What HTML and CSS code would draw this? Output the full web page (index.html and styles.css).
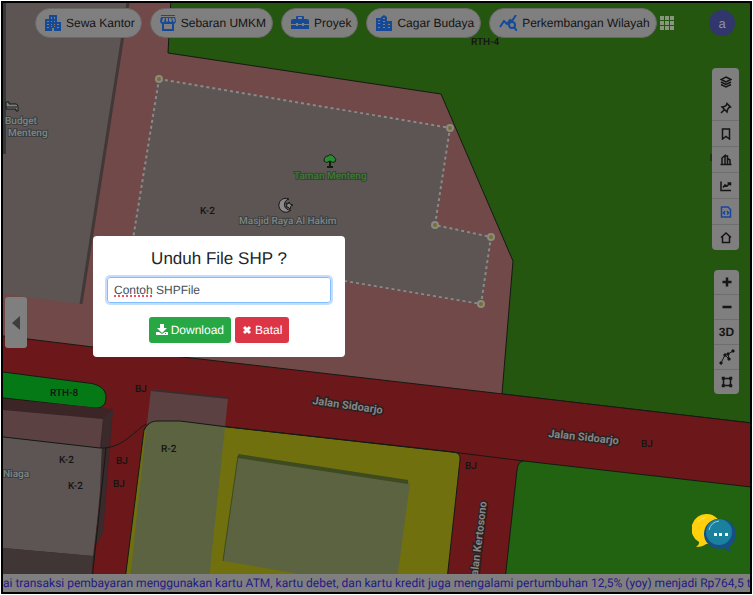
FILE: index.html
```html
<!DOCTYPE html>
<html lang="id">
<head>
<meta charset="utf-8">
<meta name="viewport" content="width=device-width, initial-scale=1">
<title>Unduh File SHP</title>
<link rel="stylesheet" href="styles.css">
</head>
<body>
<div class="app">
  <svg class="map" viewBox="3 3 747 589" preserveAspectRatio="xMidYMid slice" role="img" aria-label="Peta zonasi">
    <rect class="pink" x="3" y="3" width="747" height="589"/>
    <path class="zone park" d="M171 -2L168 53L441 94L513 261L502 394L760 424V-2Z"/>
    <path class="building" d="M3 3H128L81 304L3 294Z"/>
    <path class="wall" d="M128 3L81 304"/>
    <path class="edge-strip" d="M3 3H6V154H3Z"/>
    <path class="zone road" d="M-5 335L93 347L200 359L503 394L760 424V600H-5Z"/>
    <path class="zone lane" d="M-5 371L88 383C100 384 106 390 106 397C106 405 102 409 93 408L-5 397Z"/>
    <path class="shadow" d="M3 399L113 409L103 533L95 546L92 580H3Z"/>
    <path class="roof" d="M3 410L103 419L100 448L3 437Z"/>
    <path class="building" d="M3 437L100 448H106L101 490L93 556L3 548Z"/>
    <path class="side" d="M103 419L113 409L109 448L103 533L95 546L100 490Z"/>
    <path class="base" d="M3 548L93 556L91 580H3Z"/>
    <path class="line" d="M-5 436L100 448C122 449 133 432 146 424M106 448L92 580"/>
    <path class="zone yellow" d="M125 580L144 430C147 424 151 421 158 421L180 421L228 427L454 452Q461 453 460 460L447 580Z"/>
    <path class="roof" d="M151 389L228 398L225 427L180 421L158 421L147 424Z"/>
    <path class="olive" d="M146 428Q150 421 158 421L180 421L225 427L209 580H130Z"/>
    <path class="eave" d="M151 390L228 398"/>
    <path class="olive" d="M238 456L410 483L397 580L335 580L223 561Z"/>
    <path class="olive-edge" d="M238 456L408 482"/>
    <path class="olive-side" d="M238 456L223 561"/>
    <path class="line" d="M144 430C147 424 151 421 158 421L180 421L228 427L460 453"/>
    <path class="line" d="M460 453L524 461"/>
    <path class="zone garden" d="M505 580L517 470Q518 461 524 461L760 488V580Z"/>
    <path class="building" d="M159 79L450 128L435 225L491 237L481 304L132 245Z"/>
    <path class="selection" d="M159 79L450 128L435 225L491 237L481 304L132 245Z"/>
    <g class="nodes">
      <circle cx="159" cy="79" r="3"/><circle cx="450" cy="128" r="3"/><circle cx="435" cy="225" r="3"/><circle cx="491" cy="237" r="3"/><circle cx="481" cy="304" r="3"/>
    </g>
    <path class="bed" d="M6 102H9V104H16Q18 104 18 107V111H16V109H6Z"/>
    <path class="bed-line" d="M6 107H17"/>
    <g class="tree"><path class="trunk" d="M330 159V167M327 167H333"/><path d="M324 161Q324 156 328 156Q331 153 334 157Q337 159 335 162Q332 163 330 161Q326 164 324 161Z"/></g>
    <g class="mosque"><path d="M289 199A7 7 0 1 0 291 210A5 5 0 1 1 289 199Z"/><path d="M289 202L290 204L293 205L291 206L290 209L288 207L286 207L287 205L286 203L288 204Z"/></g>
    <g class="code">
      <text x="471" y="45">RTH-4</text><text x="200" y="214">K-2</text><text x="50" y="396">RTH-8</text>
      <text x="135" y="392">BJ</text><text x="161" y="452">R-2</text><text x="59" y="463">K-2</text><text x="68" y="489">K-2</text>
      <text x="116" y="464">BJ</text><text x="113" y="487">BJ</text><text x="465" y="469">BJ</text><text x="641" y="447">BJ</text>
    </g>
    <g class="place">
      <text x="5" y="124">Budget</text><text x="8" y="136">Menteng</text><text x="3" y="477">Niaga</text>
      <text x="239" y="224">Masjid Raya Al Hakim</text><text class="green-label" x="294" y="179">Taman Menteng</text>
    </g>
    <g class="street">
      <text transform="translate(312 404) rotate(8)">Jalan Sidoarjo</text>
      <text transform="translate(548 437) rotate(6)">Jalan Sidoarjo</text>
      <text transform="translate(477 582) rotate(-83)">Jalan Kertosono</text>
    </g>
    <path class="line" d="M711 154V161"/>
  </svg>

  <header class="topbar">
    <button class="pill" type="button"><svg viewBox="0 0 16 16"><path fill-rule="evenodd" d="M4 0H12V7H16V16H9V13H7V16H0V4H4ZM6 2V4H7V2ZM9 2V4H10V2ZM6 6V7H7V6ZM9 6V7H10V6ZM2 6V7H4V6ZM2 9V10H4V9ZM6 9V10H7V9ZM9 9V10H10V9ZM12 9V10H14V9ZM2 12V13H4V12ZM6 11V12H7V11ZM9 11V12H10V11ZM12 12V13H14V12Z"/></svg>Sewa Kantor</button>
    <button class="pill" type="button"><svg viewBox="0 0 16 16"><path fill-rule="evenodd" d="M1 0H15V1H1ZM1 2H15L16 6Q16 8 14 9V16H2V9Q0 8 0 6ZM3 3L2 6Q2 8 4 7L5 3ZM6 3V6Q7 8 8 6V3ZM9 3V6Q11 8 12 6L11 3ZM12 3L13 6Q14 8 15 6L14 3ZM4 9V14H12V9Z"/></svg>Sebaran UMKM</button>
    <button class="pill" type="button"><svg class="wide" viewBox="0 0 18 16"><path fill-rule="evenodd" d="M5 4V2Q5 1 6 1H12Q13 1 13 2V4H16Q18 4 18 6V9H13V8H11V9H7V8H5V9H0V6Q0 4 2 4ZM7 2V4H11V2ZM0 10H5V11H7V10H11V11H13V10H18V14H0Z"/></svg>Proyek</button>
    <button class="pill" type="button"><svg viewBox="0 0 16 16"><path fill-rule="evenodd" d="M0 3H5V2L8 0L11 2V6H16V16H0ZM7 3V4H9V3ZM2 5V6H4V5ZM7 6V7H9V6ZM2 8V9H4V8ZM7 9V10H9V9ZM12 9V10H14V9ZM2 12V13H4V12ZM7 12V13H9V12ZM12 12V13H14V12Z"/></svg>Cagar Budaya</button>
    <button class="pill" type="button"><svg class="wide chart" viewBox="0 0 18 16"><path d="M1 12L5 6L8 9L11 5L13 6L17 0"/><circle cx="13" cy="10" r="3"/><path d="M15 12L18 16"/></svg>Perkembangan Wilayah</button>
    <button class="apps" type="button" aria-label="Aplikasi"><svg viewBox="0 0 14 14"><path d="M0 0H4V4H0ZM5 0H9V4H5ZM10 0H14V4H10ZM0 5H4V9H0ZM5 5H9V9H5ZM10 5H14V9H10ZM0 10H4V14H0ZM5 10H9V14H5ZM10 10H14V14H10Z"/></svg></button>
    <button class="avatar" type="button">a</button>
  </header>

  <main class="workspace">
    <nav class="rail" aria-label="Alat peta">
      <button type="button" aria-label="Lapisan"><svg viewBox="0 0 24 24"><path d="M12 2L22 7L12 12L2 7ZM2 12L12 17L22 12M2 17L12 22L22 17"/></svg></button>
      <button type="button" aria-label="Sematkan"><svg viewBox="0 0 24 24"><path d="M14 3L21 10L18 11L15 15L14 20L4 10L9 9L13 6ZM9 15L2 22"/></svg></button>
      <button type="button" aria-label="Simpan"><svg viewBox="0 0 24 24"><path d="M5 2H19V22L12 17L5 22Z"/></svg></button>
      <button type="button" aria-label="Bangunan"><svg viewBox="0 0 24 24"><path d="M1 21H23M4 21V8L10 3V21M10 4H15V21M15 9L20 12V21"/></svg></button>
      <button type="button" aria-label="Grafik"><svg viewBox="0 0 24 24"><path d="M2 3V21H22M6 15L10 10L14 12L20 6M15 6H21V11"/></svg></button>
      <button class="active" type="button" aria-label="Unduh SHP"><svg viewBox="0 0 24 24"><path d="M3 2H16L21 7V22H3ZM10 10L7 14L10 17M14 10L17 14L14 17"/></svg></button>
      <button type="button" aria-label="Beranda"><svg viewBox="0 0 24 24"><path d="M2 11L12 2L22 11M5 9V21H19V9"/></svg></button>
    </nav>
    <div class="rail zoom-rail">
      <button type="button" aria-label="Perbesar"><svg class="bold" viewBox="0 0 24 24"><path d="M12 3V21M3 12H21"/></svg></button>
      <button type="button" aria-label="Perkecil"><svg class="bold" viewBox="0 0 24 24"><path d="M3 12H21"/></svg></button>
      <button type="button">3D</button>
      <button type="button" aria-label="Gambar garis"><svg class="draw" viewBox="0 0 16 16"><path d="M2 14L6 6L10 10L9 5L14 2"/><path class="dots" d="M1 13H3V15H1ZM5 5H7V7H5ZM9 9H11V11H9ZM8 4H10V6H8ZM13 1H15V3H13Z"/></svg></button>
      <button type="button" aria-label="Gambar area"><svg viewBox="0 0 24 24"><path d="M5 5H19V19H5Z"/><path class="dots" d="M3 3H6V6H3ZM18 3H21V6H18ZM3 18H6V21H3ZM18 18H21V21H18Z"/></svg></button>
    </div>
    <button class="chat" type="button" aria-label="Obrolan"><svg viewBox="0 0 44 38"><path fill="#ffd00b" d="M15 0A15 15 0 0 0 7 28Q8 30 4 33Q11 33 14 30A15 15 0 1 0 15 0Z"/><path fill="#174e84" d="M29 5A15 15 0 1 0 32 34Q35 37 40 38Q36 35 38 32A15 15 0 0 0 29 5Z"/><circle fill="#19809d" cx="27" cy="18" r="13"/><path fill="none" stroke="#9bd0d8" d="M17 16Q19 8 27 7"/><path fill="none" stroke="#ffe582" d="M6 8Q9 4 14 3"/><path fill="#fff" d="M22 19H25V22H22ZM27 19H30V22H27ZM33 19H36V22H33Z"/></svg></button>
  </main>

  <footer class="ticker"><p>ai transaksi pembayaran menggunakan kartu ATM, kartu debet, dan kartu kredit juga mengalami pertumbuhan 12,5% (yoy) menjadi Rp764,5 tr</p></footer>

  <button class="handle" type="button" aria-label="Buka panel"><svg viewBox="0 0 8 14"><path d="M8 0V14L0 7Z"/></svg></button>

  <form class="dialog" role="dialog">
    <label for="shp-name">Unduh File SHP ?</label>
    <div class="field"><input id="shp-name" type="text" value="Contoh SHPFile" spellcheck="false"></div>
    <div class="actions">
      <button class="download" type="button"><svg viewBox="0 0 12 12"><path fill-rule="evenodd" d="M4 0H8V4H11L6 9L1 4H4ZM0 8H3L6 10L9 8H12V11H0ZM9 9V10H10V9Z"/></svg>Download</button>
      <button class="cancel" type="button"><svg class="times" viewBox="0 0 10 10"><path d="M2 2L8 8M8 2L2 8"/></svg>Batal</button>
    </div>
  </form>
</div>
</body>
</html>
```

FILE: styles.css
```css
* { box-sizing: border-box; }

body {
  margin: 0;
  padding: 1px;
  background: #fff;
  font-family: "Liberation Sans", Arial, sans-serif;
  font-size: 12px;
  text-rendering: geometricPrecision;
}

button {
  margin: 0;
  padding: 0;
  border: 0;
  background: none;
  color: inherit;
  font: inherit;
  text-rendering: inherit;
}

svg { display: block; }

.app {
  position: relative;
  display: flex;
  flex-direction: column;
  min-height: calc(100vh - 2px);
  border: 2px solid #000;
  overflow: hidden;
}

/* Map */
.map {
  position: absolute;
  inset: 0;
  width: 100%;
  height: 100%;
}
.pink { fill: #714949; }
.zone { stroke: #141a14; stroke-width: 1; }
.park { fill: #24560f; }
.road { fill: #6c181a; }
.lane { fill: #057915; }
.yellow { fill: #71700f; }
.garden { fill: #216311; }
.building { fill: #5d5553; }
.wall { fill: none; stroke: #413837; stroke-width: 3; }
.edge-strip { fill: #343a3a; }
.shadow { fill: #3b2527; }
.side { fill: #3b2a2b; }
.base { fill: #403635; }
.roof { fill: #5c4142; }
.olive { fill: #5c6340; }
.eave { stroke: #3f2a2b; stroke-width: 2; }
.olive-edge { stroke: #3e4a20; stroke-width: 4; }
.olive-side { stroke: #3e4a20; stroke-width: 1; }
.line { fill: none; stroke: #141a14; stroke-width: 1; }
.selection {
  fill: none;
  stroke: #848c8a;
  stroke-width: 2;
  stroke-dasharray: 3 3;
}
.nodes circle { fill: #76702c; stroke: #8b8b83; stroke-width: 2; }
.bed { fill: #7f8080; stroke: #171717; stroke-width: 1; }
.bed-line { stroke: #171717; stroke-width: 1; }
.tree path { fill: #2c8a35; stroke: #10200f; stroke-width: 1; }
.tree .trunk { stroke-width: 2; }
.mosque path { fill: #8a8a8a; stroke: #171717; stroke-width: 1; }
.map text { font-family: Roboto, sans-serif; font-size: 10px; }
.code text { fill: #141414; font-weight: 500; }
.place text {
  fill: #7f8585;
  stroke: #3c3f3f;
  stroke-width: 2;
  paint-order: stroke;
  font-weight: 500;
}
.place .green-label { fill: #3f7a30; }
.map .street text {
  fill: #858585;
  stroke: #2e2020;
  stroke-width: 3;
  paint-order: stroke;
  font-size: 11px;
  font-weight: 700;
}

/* Top bar */
.topbar {
  position: relative;
  display: flex;
  align-items: center;
  gap: 8px;
  padding: 5px 15px 0 32px;
}
.pill {
  display: flex;
  align-items: center;
  gap: 5px;
  height: 30px;
  padding: 0 6px 0 9px;
  border: 1px solid #686868;
  border-radius: 15px;
  background: #7f7f7f;
  color: #141414;
  white-space: nowrap;
}
.pill svg { width: 16px; height: 16px; fill: #164a96; }
.pill .wide { width: 18px; }
.pill .chart { fill: none; stroke: #164a96; stroke-width: 2; }
.apps svg { width: 14px; height: 14px; fill: #88957f; }
.apps { margin-left: -5px; }
.avatar {
  width: 26px;
  height: 26px;
  margin-left: auto;
  border-radius: 50%;
  background: #31366c;
  color: #8f8fa8;
  font-size: 13px;
}

/* Tool rails */
.workspace {
  position: relative;
  flex: 1;
  display: flex;
  flex-direction: column;
  align-items: flex-end;
  gap: 20px;
  padding: 30px 11px 22px;
}
.rail {
  display: flex;
  flex-direction: column;
  width: 27px;
  border-radius: 4px;
  background: #7f7f7f;
  color: #151515;
}
.rail button {
  display: grid;
  place-items: center;
  height: 26px;
  border-top: 1px solid #6c706c;
}
.rail:not(.zoom-rail) button:nth-child(-n+2) { border-top-color: transparent; }
.rail svg {
  width: 12px;
  height: 12px;
  fill: none;
  stroke: currentColor;
  stroke-width: 3;
}
.rail .active { color: #1a43a0; }
.rail .bold { stroke-width: 5; }
.rail .draw { width: 16px; height: 16px; stroke-width: 1; }
.dots { fill: currentColor; }
.zoom-rail { width: 25px; }
.zoom-rail button { height: 25px; font-weight: bold; }
.zoom-rail button:first-child { height: 24px; border-top: 0; }
.chat { margin-top: auto; margin-right: 3px; }
.chat svg { width: 44px; height: 38px; }

/* News ticker */
.ticker {
  position: relative;
  overflow: hidden;
  background: #7f7f7f;
  color: #241b84;
  font-family: Roboto, sans-serif;
  line-height: 18px;
  white-space: nowrap;
}
.ticker p { margin: 0; }

.handle {
  position: absolute;
  top: 294px;
  left: 2px;
  display: grid;
  place-items: center;
  width: 22px;
  height: 51px;
  border-radius: 3px;
  background: #7f7f7f;
}
.handle svg { width: 8px; height: 14px; fill: #3e3e3e; }

/* Download dialog */
.dialog {
  position: absolute;
  top: 233px;
  left: 90px;
  display: flex;
  flex-direction: column;
  width: 252px;
  padding: 12px 14px 14px;
  border-radius: 4px;
  background: #fff;
}
.dialog label {
  color: #212529;
  font-size: 17px;
  line-height: 22px;
  text-align: center;
}
.field { position: relative; margin-top: 7px; }
.field input {
  display: block;
  width: 100%;
  height: 26px;
  padding: 0 6px;
  border: 1px solid #80bdff;
  border-radius: 3px;
  outline: 2px solid #c5deff;
  color: #495057;
  font: inherit;
  text-rendering: inherit;
}
.field::after {
  content: "";
  position: absolute;
  left: 7px;
  bottom: 6px;
  width: 38px;
  border-bottom: 2px dotted #ee5060;
}
.actions {
  display: flex;
  justify-content: center;
  gap: 4px;
  margin-top: 14px;
}
.actions button {
  display: flex;
  align-items: center;
  gap: 3px;
  height: 26px;
  padding: 0 7px;
  border-radius: 3px;
  color: #fff;
}
.actions svg { width: 12px; height: 12px; fill: #fff; }
.actions .times { width: 10px; height: 10px; stroke: #fff; stroke-width: 3; }
.download { background: #28a745; }
.cancel { background: #dc3545; }
```
